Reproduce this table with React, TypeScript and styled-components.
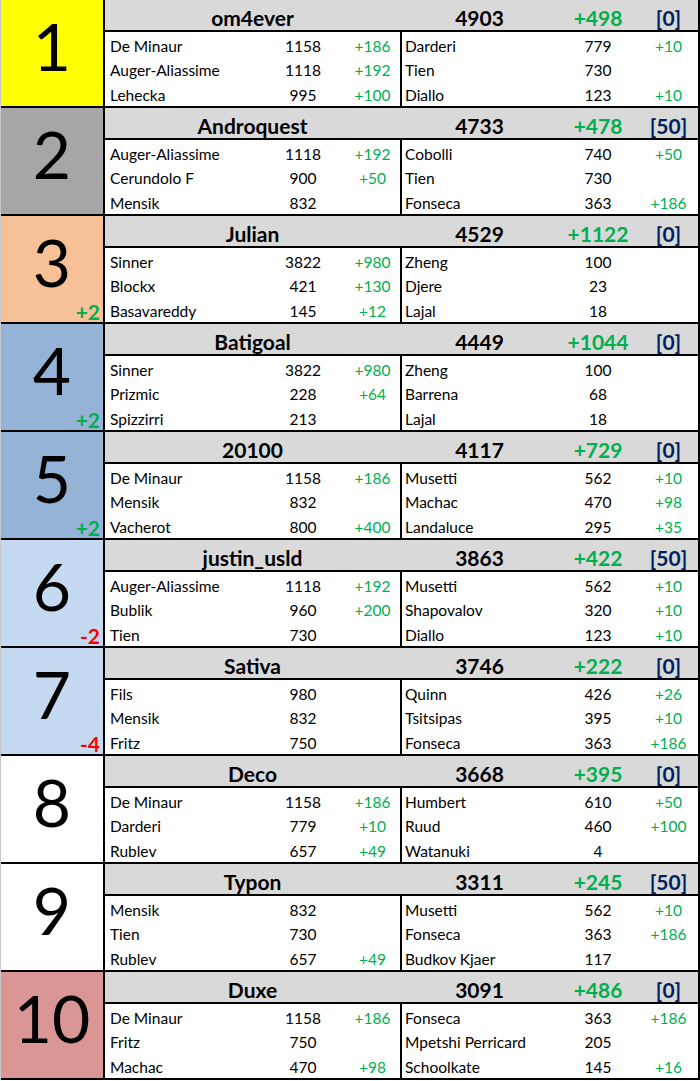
import styled, { createGlobalStyle } from 'styled-components'

const GlobalStyle = createGlobalStyle`
  body {
    margin: 0;
    background: #ffffff;
    font-family: Lato, "Open Sans", sans-serif;
    color: #000000;
  }
`

type Pick = [string, string, string?]

type Team = {
  rank: number
  bg: string
  move?: string
  name: string
  score: string
  gain: string
  bonus: string
  left: Pick[]
  right: Pick[]
}

const teams: Team[] = [
  {
    rank: 1, bg: '#ffff00', name: 'om4ever', score: '4903', gain: '+498', bonus: '[0]',
    left: [['De Minaur', '1158', '+186'], ['Auger-Aliassime', '1118', '+192'], ['Lehecka', '995', '+100']],
    right: [['Darderi', '779', '+10'], ['Tien', '730'], ['Diallo', '123', '+10']],
  },
  {
    rank: 2, bg: '#a6a6a6', name: 'Androquest', score: '4733', gain: '+478', bonus: '[50]',
    left: [['Auger-Aliassime', '1118', '+192'], ['Cerundolo F', '900', '+50'], ['Mensik', '832']],
    right: [['Cobolli', '740', '+50'], ['Tien', '730'], ['Fonseca', '363', '+186']],
  },
  {
    rank: 3, bg: '#f7c197', move: '+2', name: 'Julian', score: '4529', gain: '+1122', bonus: '[0]',
    left: [['Sinner', '3822', '+980'], ['Blockx', '421', '+130'], ['Basavareddy', '145', '+12']],
    right: [['Zheng', '100'], ['Djere', '23'], ['Lajal', '18']],
  },
  {
    rank: 4, bg: '#95b3d7', move: '+2', name: 'Batigoal', score: '4449', gain: '+1044', bonus: '[0]',
    left: [['Sinner', '3822', '+980'], ['Prizmic', '228', '+64'], ['Spizzirri', '213']],
    right: [['Zheng', '100'], ['Barrena', '68'], ['Lajal', '18']],
  },
  {
    rank: 5, bg: '#95b3d7', move: '+2', name: '20100', score: '4117', gain: '+729', bonus: '[0]',
    left: [['De Minaur', '1158', '+186'], ['Mensik', '832'], ['Vacherot', '800', '+400']],
    right: [['Musetti', '562', '+10'], ['Machac', '470', '+98'], ['Landaluce', '295', '+35']],
  },
  {
    rank: 6, bg: '#c5d9f1', move: '-2', name: 'justin_usld', score: '3863', gain: '+422', bonus: '[50]',
    left: [['Auger-Aliassime', '1118', '+192'], ['Bublik', '960', '+200'], ['Tien', '730']],
    right: [['Musetti', '562', '+10'], ['Shapovalov', '320', '+10'], ['Diallo', '123', '+10']],
  },
  {
    rank: 7, bg: '#c5d9f1', move: '-4', name: 'Sativa', score: '3746', gain: '+222', bonus: '[0]',
    left: [['Fils', '980'], ['Mensik', '832'], ['Fritz', '750']],
    right: [['Quinn', '426', '+26'], ['Tsitsipas', '395', '+10'], ['Fonseca', '363', '+186']],
  },
  {
    rank: 8, bg: '#ffffff', name: 'Deco', score: '3668', gain: '+395', bonus: '[0]',
    left: [['De Minaur', '1158', '+186'], ['Darderi', '779', '+10'], ['Rublev', '657', '+49']],
    right: [['Humbert', '610', '+50'], ['Ruud', '460', '+100'], ['Watanuki', '4']],
  },
  {
    rank: 9, bg: '#ffffff', name: 'Typon', score: '3311', gain: '+245', bonus: '[50]',
    left: [['Mensik', '832'], ['Tien', '730'], ['Rublev', '657', '+49']],
    right: [['Musetti', '562', '+10'], ['Fonseca', '363', '+186'], ['Budkov Kjaer', '117']],
  },
  {
    rank: 10, bg: '#da9694', name: 'Duxe', score: '3091', gain: '+486', bonus: '[0]',
    left: [['De Minaur', '1158', '+186'], ['Fritz', '750'], ['Machac', '470', '+98']],
    right: [['Fonseca', '363', '+186'], ['Mpetshi Perricard', '205'], ['Schoolkate', '145', '+16']],
  },
]

const Table = styled.div`
  width: 700px;
  box-sizing: border-box;
  border-left: 1px solid #c8c8c8;
`

const Block = styled.section`
  display: flex;
  height: 108px;
  box-sizing: border-box;
  border-bottom: 2px solid #000;
  border-right: 2px solid #000;
`

const RankCell = styled.div<{ $bg: string }>`
  position: relative;
  width: 104px;
  flex-shrink: 0;
  border-right: 2px solid #000;
  background: ${(p) => p.$bg};
  display: flex;
  align-items: center;
  justify-content: center;
  padding-bottom: 14px;
  box-sizing: border-box;
  font-size: 66px;
  line-height: 1;
`

const Move = styled.span<{ $up: boolean }>`
  position: absolute;
  right: 3px;
  bottom: 0;
  font-size: 21px;
  font-weight: 700;
  line-height: 1;
  color: ${(p) => (p.$up ? '#00b050' : '#ff0000')};
`

const Body = styled.div`
  flex: 1;
  display: flex;
  flex-direction: column;
`

const Header = styled.div`
  height: 30px;
  flex-shrink: 0;
  background: #d9d9d9;
  border-bottom: 2px solid #000;
  display: grid;
  grid-template-columns: 295px 2px 155px 82px 1fr;
  align-items: center;
  font-size: 21px;
  font-weight: 700;
  text-align: center;
`

const HeadCell = styled.span<{ $col: number; $color?: string }>`
  grid-column: ${(p) => p.$col};
  padding-top: 4px;
  color: ${(p) => p.$color ?? '#000'};
`

const Rows = styled.div`
  flex: 1;
  display: flex;
`

const Half = styled.div<{ $side: 'left' | 'right' }>`
  display: grid;
  grid-template-columns: ${(p) => (p.$side === 'left' ? '156px 84px 55px' : '155px 82px 1fr')};
  grid-template-rows: repeat(3, 1fr);
  align-items: center;
  font-size: 15.5px;
  ${(p) => (p.$side === 'left' ? 'border-right: 2px solid #000;' : 'flex: 1;')}
`

const Cell = styled.span`
  padding-top: 3px;
  white-space: nowrap;
`

const Player = styled(Cell)<{ $pad: number }>`
  padding-left: ${(p) => p.$pad}px;
`

const Points = styled(Cell)`
  text-align: center;
`

const Gain = styled(Cell)`
  text-align: center;
  color: #00b050;
`

function PickHalf({ side, picks }: { side: 'left' | 'right'; picks: Pick[] }) {
  return (
    <Half $side={side}>
      {picks.map(([name, pts, gain], i) => [
        <Player key={`n${i}`} $pad={side === 'left' ? 5 : 3}>{name}</Player>,
        <Points key={`p${i}`}>{pts}</Points>,
        <Gain key={`g${i}`}>{gain ?? ''}</Gain>,
      ])}
    </Half>
  )
}

export default function App() {
  return (
    <>
      <GlobalStyle />
      <Table>
        {teams.map((t) => (
          <Block key={t.rank}>
            <RankCell $bg={t.bg}>
              {t.rank}
              {t.move && <Move $up={t.move.startsWith('+')}>{t.move}</Move>}
            </RankCell>
            <Body>
              <Header>
                <HeadCell $col={1}>{t.name}</HeadCell>
                <HeadCell $col={3}>{t.score}</HeadCell>
                <HeadCell $col={4} $color="#00b050">{t.gain}</HeadCell>
                <HeadCell $col={5} $color="#002060">{t.bonus}</HeadCell>
              </Header>
              <Rows>
                <PickHalf side="left" picks={t.left} />
                <PickHalf side="right" picks={t.right} />
              </Rows>
            </Body>
          </Block>
        ))}
      </Table>
    </>
  )
}
